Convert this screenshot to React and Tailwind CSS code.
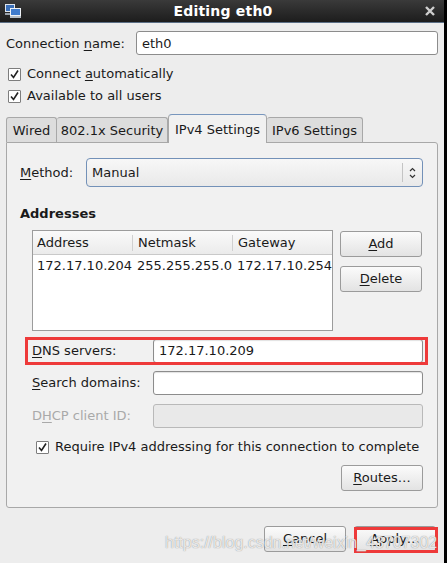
const font = { fontFamily: '"DejaVu Sans", Verdana, sans-serif' }

function Check() {
  return (
    <span className="inline-flex items-center justify-center w-[13px] h-[13px] border border-[#7d7d7d] bg-white rounded-[1px] shrink-0">
      <svg width="11" height="11" viewBox="0 0 11 11">
        <path d="M2 5.5 L4.5 8.5 L9 1.5" fill="none" stroke="#222" strokeWidth="1.6" />
      </svg>
    </span>
  )
}

function Btn({ children, className = '' }) {
  return (
    <div className={`h-[26px] w-[82px] flex items-center justify-center rounded-[3px] border border-[#9b9b9b] bg-gradient-to-b from-[#fbfbfb] to-[#e3e3e3] text-[#1a1a1a] ${className}`}>
      {children}
    </div>
  )
}

function Field({ value = '', disabled }) {
  return (
    <div className={`h-[24px] w-[270px] rounded-[3px] border flex items-center px-[5px] ${disabled ? 'border-[#b9b9b9] bg-[#e9e9e9]' : 'border-[#8c8c8c] bg-white shadow-[inset_0_1px_1px_rgba(0,0,0,0.12)]'}`}>
      {value}
    </div>
  )
}

export default function App() {
  return (
    <div className="relative w-[447px] h-[563px] bg-black flex text-[13px] text-[#1a1a1a] overflow-hidden" style={font}>
      <div className="w-[444px] h-full bg-[#ededed] flex flex-col">
        {/* title bar */}
        <div className="h-[23px] shrink-0 bg-gradient-to-b from-[#3a3a3a] to-[#1d1d1d] border-b border-[#5b6f86] flex items-center px-[4px]">
          <svg width="18" height="16" viewBox="0 0 18 16">
            <rect x="1" y="1" width="10" height="8" fill="#dfe6ee" />
            <rect x="2" y="2" width="8" height="6" fill="#3a6fb8" />
            <rect x="1" y="10" width="10" height="2" fill="#9aa3ad" />
            <rect x="6" y="5" width="11" height="8" fill="#eef2f6" />
            <rect x="7" y="6" width="9" height="6" fill="#3f7bcc" />
            <rect x="6" y="13" width="11" height="2" fill="#b7bec6" />
          </svg>
          <div className="flex-1 text-center text-white font-bold text-[14px] tracking-[0.2px]">Editing eth0</div>
          <svg width="12" height="12" viewBox="0 0 12 12" className="mr-[4px]">
            <path d="M2 2 L10 10 M10 2 L2 10" stroke="#cfcfcf" strokeWidth="2.4" />
          </svg>
        </div>

        {/* connection name */}
        <div className="mt-[8px] h-[24px] flex items-center pl-[6px]">
          <span className="w-[130px] pt-px">Connection <u className="underline-offset-2">n</u>ame:</span>
          <div className="h-[24px] w-[302px] rounded-[3px] border border-[#8c8c8c] bg-white flex items-center px-[5px] pt-px">eth0</div>
        </div>

        <div className="h-[22px] mt-[8px] flex items-center gap-[6px] pl-[8px]">
          <Check />
          <span>Connect <u className="underline-offset-2">a</u>utomatically</span>
        </div>
        <div className="h-[22px] flex items-center gap-[6px] pl-[8px]">
          <Check />
          <span>Available to all users</span>
        </div>

        {/* tabs */}
        <div className="mt-[7px] h-[28px] flex items-end pl-[6px]">
          <div className="w-[51px] h-[25px] flex items-center justify-center pt-[2px] border border-b-0 border-[#a8a8a8] bg-[#dddddd] rounded-t-[3px]">Wired</div>
          <div className="w-[111px] h-[25px] flex items-center justify-center pt-[2px] border border-b-0 border-l-0 border-[#a8a8a8] bg-[#dddddd] rounded-t-[3px]">802.1x Security</div>
          <div className="relative z-10 -mb-px w-[99px] h-[29px] flex items-start pt-[5px] justify-center border border-b-0 border-[#a8a8a8] border-t-[#7896bd] bg-[#f1f1f1] rounded-t-[4px]">IPv4 Settings</div>
          <div className="w-[96px] h-[25px] flex items-center justify-center pt-[2px] border border-b-0 border-l-0 border-[#a8a8a8] bg-[#dddddd] rounded-t-[3px]">IPv6 Settings</div>
        </div>

        {/* panel */}
        <div className="ml-[6px] w-[432px] h-[366px] border border-[#a8a8a8] rounded-b-[3px] rounded-tr-[3px] bg-[#f1f1f1] pl-[13px] pr-[14px] flex flex-col">
          <div className="mt-[15px] h-[29px] flex items-center">
            <span className="w-[66px]"><u className="underline-offset-2">M</u>ethod:</span>
            <div className="h-[29px] flex-1 rounded-[4px] border border-[#7391b8] bg-gradient-to-b from-[#f7f7f7] to-[#e9e9e9] flex items-center pl-[5px]">
              <span className="flex-1">Manual</span>
              <div className="w-px h-[19px] bg-[#c4c4c4]" />
              <svg width="19" height="16" viewBox="0 0 19 16">
                <path d="M7 6 L9.5 3.5 L12 6 M7 10 L9.5 12.5 L12 10" fill="none" stroke="#333" strokeWidth="1.2" />
              </svg>
            </div>
          </div>

          <div className="mt-[17px] h-[20px] flex items-center font-bold">Addresses</div>

          <div className="mt-[6px] flex pl-[12px]">
            <div className="w-[301px] h-[101px] border border-[#9c9c9c] bg-white">
              <div className="h-[24px] flex items-center bg-gradient-to-b from-[#fafafa] to-[#ebebeb] border-b border-[#c9c9c9]">
                <div className="w-[100px] pl-[4px] border-r border-[#d0d0d0] h-[16px] flex items-center">Address</div>
                <div className="w-[100px] pl-[5px] border-r border-[#d0d0d0] h-[16px] flex items-center">Netmask</div>
                <div className="flex-1 pl-[5px]">Gateway</div>
              </div>
              <div className="h-[22px] flex items-center pl-[4px] whitespace-nowrap">
                <span className="w-[100px]">172.17.10.204</span>
                <span className="w-[100px]">255.255.255.0</span>
                <span>172.17.10.254</span>
              </div>
            </div>
            <div className="ml-[7px] flex flex-col">
              <Btn className="mt-px"><span><u className="underline-offset-2">A</u>dd</span></Btn>
              <Btn className="mt-[9px]"><span><u className="underline-offset-2">D</u>elete</span></Btn>
            </div>
          </div>

          <div className="mt-[8px] h-[24px] flex items-center pl-[12px]">
            <span className="w-[121px]"><u className="underline-offset-2">D</u>NS servers:</span>
            <Field value="172.17.10.209" />
          </div>
          <div className="mt-[8px] h-[24px] flex items-center pl-[12px]">
            <span className="w-[121px]"><u className="underline-offset-2">S</u>earch domains:</span>
            <Field />
          </div>
          <div className="mt-[9px] h-[24px] flex items-center pl-[12px] text-[#a9a9a9]">
            <span className="w-[121px]">D<u className="underline-offset-2">H</u>CP client ID:</span>
            <Field disabled />
          </div>

          <div className="mt-[9px] h-[20px] flex items-center gap-[6px] pl-[16px]">
            <Check />
            <span>Require IPv4 addressing for this connection to complete</span>
          </div>

          <div className="mt-[8px] flex justify-end">
            <Btn><span><u className="underline-offset-2">R</u>outes…</span></Btn>
          </div>
        </div>

        {/* dialog buttons */}
        <div className="mt-[18px] flex justify-end gap-[8px] pr-[8px]">
          <Btn><span><u className="underline-offset-2">C</u>ancel</span></Btn>
          <Btn><span><u className="underline-offset-2">A</u>pply…</span></Btn>
        </div>
      </div>

      {/* annotations */}
      <div className="absolute left-[25px] top-[337px] w-[403px] h-[28px] border-[3px] border-[#ee3a3a]" />
      <div className="absolute left-[354px] top-[527px] w-[84px] h-[26px] border-[3px] border-[#ee3a3a]" />
      <div className="absolute left-[165px] top-[531px] text-[16px] text-white/80 whitespace-nowrap [text-shadow:0_0_1px_rgba(90,90,90,0.8)]" style={{ fontFamily: '"Liberation Sans", Arial, sans-serif' }}>
        https://blog.csdn.net/weixin_43707302
      </div>
    </div>
  )
}
